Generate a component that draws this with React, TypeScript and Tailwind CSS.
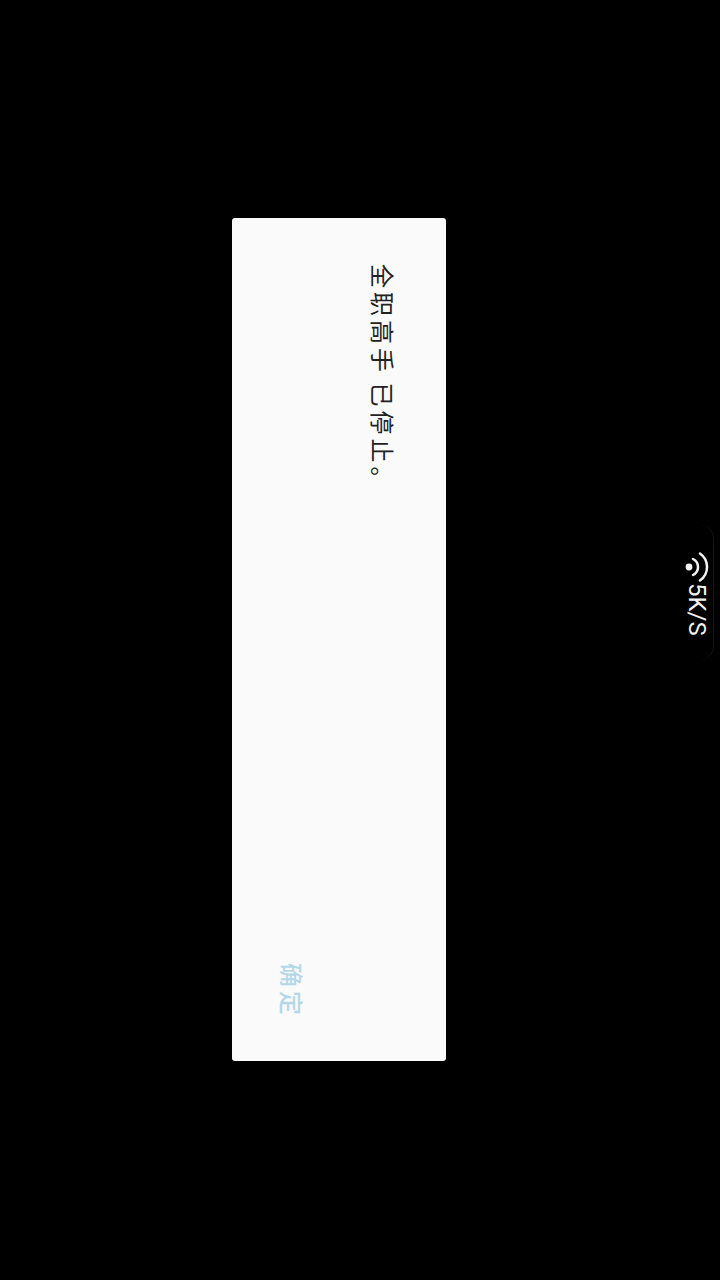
import React from "react";

const WifiIcon = () => (
  <svg width="25" height="30" viewBox="0 0 25 30" fill="none" stroke="#f2f2f2" strokeLinecap="round" className="shrink-0">
    <circle cx="5" cy="15" r="3.4" fill="#f2f2f2" stroke="none" />
    <path d="M9 7A8.9 8.9 0 0 1 9 23" strokeWidth="2.5" />
    <path d="M16 1.5A16.5 16.5 0 0 1 16 28.5" strokeWidth="2.5" />
  </svg>
);

const App: React.FC = () => {
  return (
    <div className="relative h-[1280px] w-[720px] overflow-hidden bg-black pl-[232px] pt-[218px] font-['Noto_Sans_CJK_SC',sans-serif]">
      {/* Dialog, laid out sideways */}
      <div className="flex h-[843px] w-[214px] flex-col rounded-[3px] bg-[#fafafa] [text-orientation:sideways] [writing-mode:vertical-rl]">
        <p className="mr-[49px] mt-[46px] text-[24px] leading-[28px] tracking-[4px] [word-spacing:-3px] text-[#222222]">
          全职高手 已停止。
        </p>
        <button className="mb-[42px] mr-[63px] self-end text-[24px] font-medium leading-[28px] tracking-[4px] text-[#b5d8e8]">
          确定
        </button>
      </div>

      {/* Network speed pill */}
      <div className="absolute right-[6px] top-[525px] flex h-[135px] w-[34px] flex-row items-center rounded-r-[14px] border-r border-[#141414] pt-[27px] [text-orientation:sideways] [writing-mode:vertical-rl]">
        <WifiIcon />
        <span className="mt-[1px] font-['Roboto',sans-serif] text-[24px] leading-[24px] text-[#f2f2f2]">5K/S</span>
      </div>
    </div>
  );
};

export default App;
